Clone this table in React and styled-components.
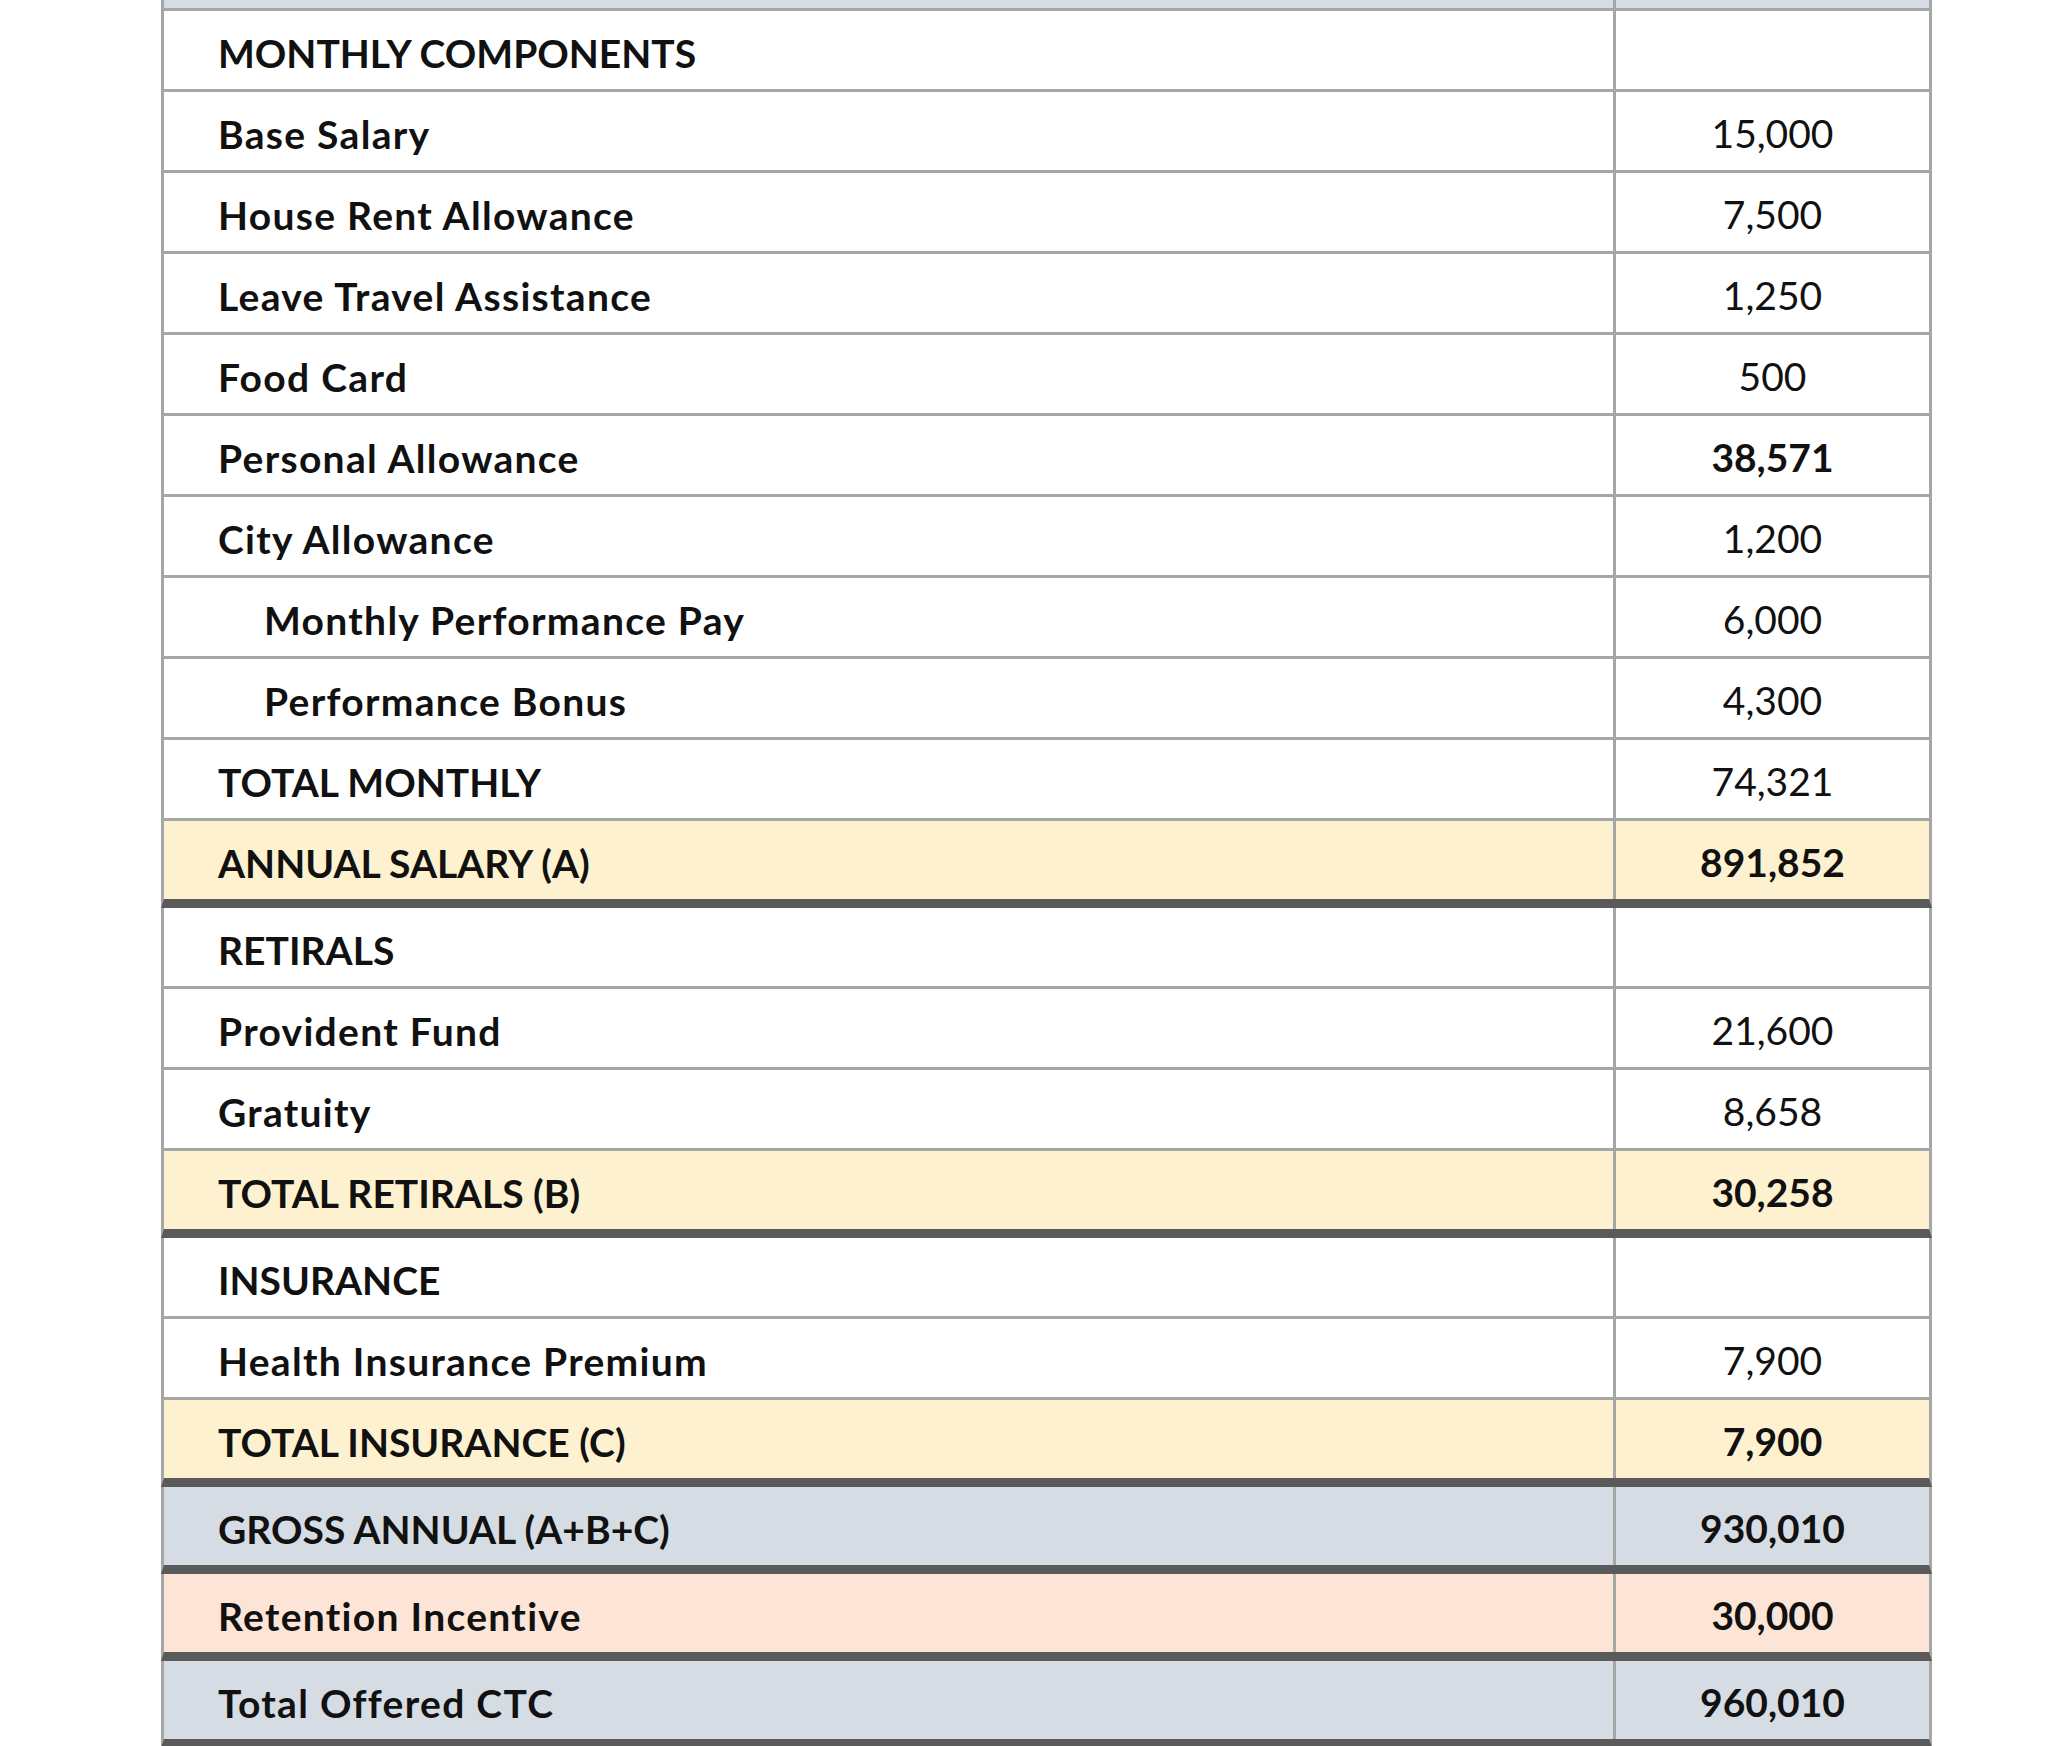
import React from "react";
import styled, { createGlobalStyle } from "styled-components";

const GlobalStyle = createGlobalStyle`
  body {
    margin: 0;
    background: #ffffff;
    font-family: "Lato", "Carlito", "Liberation Sans", sans-serif;
    color: #111111;
  }
`;

const rows = [
  { label: "MONTHLY COMPONENTS", value: "" },
  { label: "Base Salary", value: "15,000" },
  { label: "House Rent Allowance", value: "7,500" },
  { label: "Leave Travel Assistance", value: "1,250" },
  { label: "Food Card", value: "500" },
  { label: "Personal Allowance", value: "38,571", strong: true },
  { label: "City Allowance", value: "1,200" },
  { label: "Monthly Performance Pay", value: "6,000", indent: true },
  { label: "Performance Bonus", value: "4,300", indent: true },
  { label: "TOTAL MONTHLY", value: "74,321" },
  { label: "ANNUAL SALARY (A)", value: "891,852", strong: true, tone: "yellow", heavy: true },
  { label: "RETIRALS", value: "" },
  { label: "Provident Fund", value: "21,600" },
  { label: "Gratuity", value: "8,658" },
  { label: "TOTAL RETIRALS (B)", value: "30,258", strong: true, tone: "yellow", heavy: true },
  { label: "INSURANCE", value: "" },
  { label: "Health Insurance Premium", value: "7,900" },
  { label: "TOTAL INSURANCE (C)", value: "7,900", strong: true, tone: "yellow", heavy: true },
  { label: "GROSS ANNUAL (A+B+C)", value: "930,010", strong: true, tone: "blue", heavy: true },
  { label: "Retention Incentive", value: "30,000", strong: true, tone: "peach", heavy: true },
  { label: "Total Offered CTC", value: "960,010", strong: true, tone: "blue", heavy: true },
];

const tones = {
  white: "#ffffff",
  yellow: "#fef1cf",
  blue: "#d6dce4",
  peach: "#fce4d6",
};

// sheet headings are all caps; regular labels get a bit more tracking
const isCaps = (text) => text === text.toUpperCase();

const App = () => {
  return (
    <>
      <GlobalStyle />
      <Page>
        <Sheet>
          <HeaderRow>
            <Cell caps />
            <ValueCell>Amount, INR</ValueCell>
          </HeaderRow>
          {rows.map((row) => (
            <Row key={row.label} tone={row.tone} heavy={row.heavy}>
              <Cell indent={row.indent} caps={isCaps(row.label)}>
                {row.label}
              </Cell>
              <ValueCell strong={row.strong}>{row.value}</ValueCell>
            </Row>
          ))}
        </Sheet>
      </Page>
    </>
  );
};

export default App;

const Page = styled.div`
  width: 2048px;
  height: 1746px;
  overflow: hidden;
  padding-left: 161px;
  box-sizing: border-box;
`;

const Sheet = styled.div`
  width: 1771px;
  display: flex;
  flex-direction: column;
`;

const Row = styled.div`
  display: grid;
  grid-template-columns: 1452px 1fr;
  height: 78px;
  background-color: ${(p) => tones[p.tone || "white"]};
  border-left: 3px solid #a6a6a6;
  border-right: 3px solid #a6a6a6;
  border-bottom: ${(p) => (p.heavy ? "9px solid #5a5a5a" : "3px solid #a6a6a6")};
`;

const HeaderRow = styled(Row)`
  margin-top: -70px;
  background-color: #d6dce4;
  font-weight: 700;
`;

const Cell = styled.div`
  display: flex;
  align-items: center;
  padding-left: ${(p) => (p.indent ? "100px" : "54px")};
  padding-top: 5px;
  border-right: 3px solid #a6a6a6;
  font-size: 39px;
  font-weight: 700;
  letter-spacing: ${(p) => (p.caps ? "0" : "1.3px")};
  white-space: nowrap;
`;

const ValueCell = styled.div`
  display: flex;
  align-items: center;
  justify-content: center;
  padding-top: 4px;
  font-size: 39px;
  font-weight: ${(p) => (p.strong ? 700 : 400)};
  white-space: nowrap;
`;
